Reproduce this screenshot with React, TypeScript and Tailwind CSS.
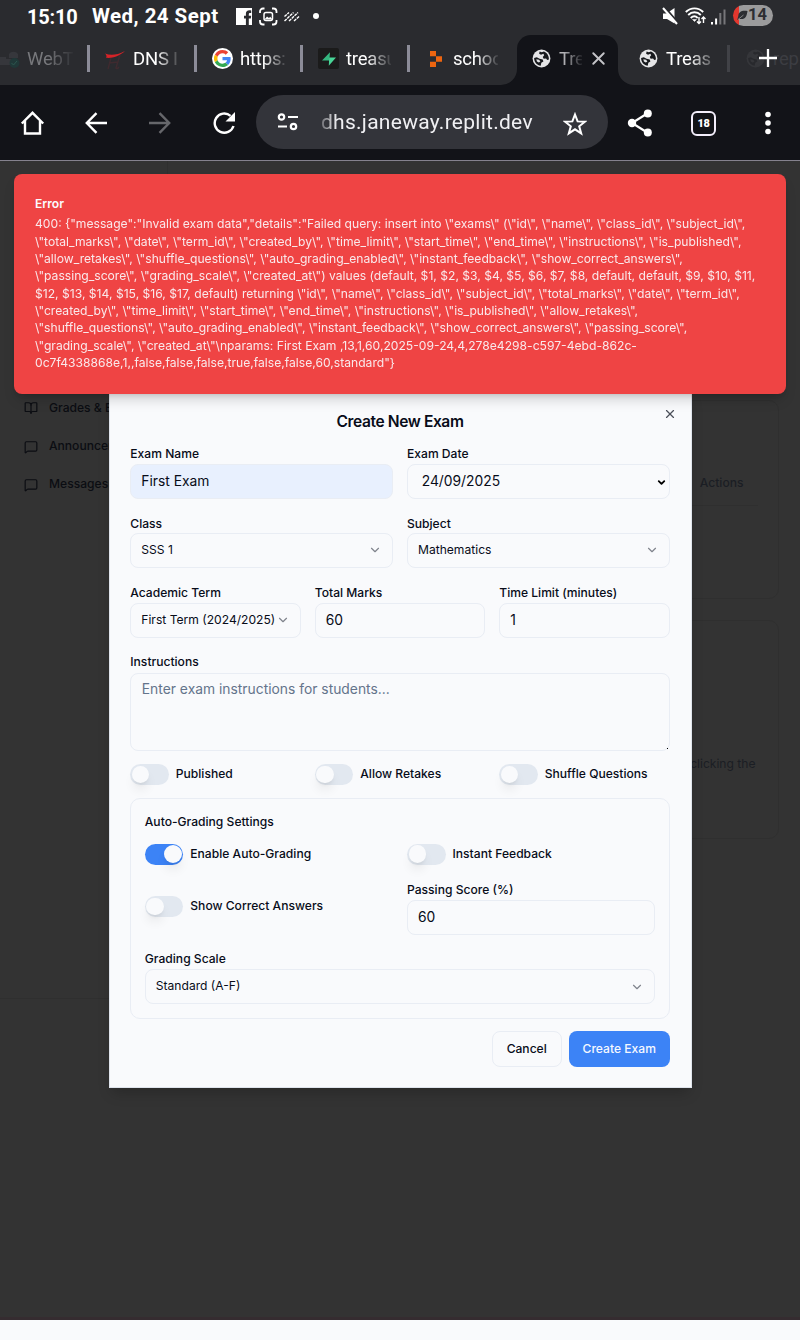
import React from "react";
import { BookOpen, ChevronDown, MessageSquare, X } from "lucide-react";

function Globe({ className = "" }: { className?: string }) {
  return (
    <svg viewBox="0 0 20 20" className={`size-[19px] shrink-0 ${className}`}>
      <circle cx="10" cy="10" r="9.4" fill="#e5e5e7" />
      <path d="M8 2.500 7.500 5l2 1 2.500-1 .8 1.500-1.500 2 1 1.700 2.500-.2 1.200 1.500 1.800-.5c.2-4-2-7-5.300-8.400L10.300 3.500Z" fill="#17191d" />
      <path d="M2.200 9.500 5 8.800l3 1.500 3.300.7.700 2.200-2.200 1.400-.6 3C5.500 17.500 2.200 14 2.200 9.500Z" fill="#17191d" />
      <path d="m4.500 10.800 3 .6 1.300 1.700-1.600 1.200-2-1.200Z" fill="#e5e5e7" />
    </svg>
  );
}

function TabText({ children, className }: { children: React.ReactNode; className: string }) {
  return (
    <span className={`overflow-hidden whitespace-nowrap text-[18.5px] leading-6 tracking-[-0.2px] ${className}`}>{children}</span>
  );
}

function Divider({ dim = false }: { dim?: boolean }) {
  return <span className={`h-[27px] w-[3px] shrink-0 ${dim ? "bg-[#414247]" : "bg-[#8c8c98]"}`} />;
}

function StatusBar() {
  return (
    <div className="flex h-[35px] shrink-0 items-center pb-[3px] pl-[27px] pr-[27px]">
      <span className="w-[65px] whitespace-nowrap pt-px text-[20px] font-bold tracking-[-0.2px]">15:10</span>
      <span className="w-[144px] whitespace-nowrap pt-px text-[20.500px] font-bold tracking-[0.450px]">Wed, 24 Sept</span>
      <svg viewBox="0 0 90 20" className="mt-px h-5 w-[90px]" fill="none">
        <path d="M0 1h16v17h-3.200v-6.500h2l.4-2.700h-2.400V7.200c0-.9.4-1.300 1.400-1.300h1V3.500c-3.700-.6-5.300.7-5.300 3.300v2H8v2.700h1.900V18H0Z" fill="white" />
        <path d="M24 6V4.500A3 3 0 0 1 27 1.500h1.500M36 1.500h1.500a3 3 0 0 1 3 3V6M40.500 13v1.500a3 3 0 0 1-3 3H36M28.500 17.500H27a3 3 0 0 1-3-3V13" stroke="white" strokeWidth="1.800" />
        <rect x="28" y="5.500" width="8.500" height="8" rx="2" stroke="white" strokeWidth="1.500" />
        <path d="m28.500 12.500 2.500-3 2 1.500 1.200-1.200 2.300 2.700Z" fill="white" />
        <path d="m48.500 14 9-8.500M53 14l9-8.500M58 14l5.500-5M48.500 9.500l4.500-4" stroke="white" strokeWidth="1.400" strokeDasharray="3 .8" />
        <circle cx="80" cy="9" r="3" fill="white" />
      </svg>
      <div className="ml-auto flex items-center gap-[6px]">
        <svg viewBox="0 0 16 18" className="ml-px h-[18px] w-4">
          <path d="M1 6.500h3.500L12.500 1v15.500L5 12H1Z" fill="white" />
          <path d="m2.500 0 13 15" stroke="#2a2b2f" strokeWidth="2" />
          <path d="m1 1 14 16" stroke="white" strokeWidth="2" />
        </svg>
        <svg viewBox="0 0 21 18" className="ml-px h-[18px] w-[21px]" fill="none" stroke="white">
          <path d="M.8 5c5-4.900 12.400-4.900 17.400 0M3.200 8c3.600-3.600 9-3.600 12.600 0M5.700 11c2.300-2.100 5-2.100 7 0" strokeWidth="1.900" />
          <path d="m7.500 12.500 2 2 2-2Z" fill="white" strokeWidth=".5" />
          <path d="M14 10v6.500m-2-2 2 2 2-2M18.500 16v-6m-2 2 2-2 2 2" strokeWidth="1.400" />
        </svg>
        <svg viewBox="0 0 15 18" className="-ml-px mr-px h-[18px] w-[15px]">
          <path d="M0 15h2v2.500H0ZM4.100 11.500h2v6h-2Z" fill="white" />
          <path d="M8.300 6h2v11.500h-2ZM12.500 2.500h2v15h-2Z" fill="#77777a" />
        </svg>
        <div className="-mt-[2px] flex h-[21px] w-10 items-center overflow-hidden rounded-full bg-[linear-gradient(90deg,#e4372e_0_6px,#9b9b9c_6px)] pl-[4px] text-[#2d2e32]">
          <svg viewBox="0 0 11 11" className="size-[11px] shrink-0">
            <path d="M10.500 1C5-.2 1.300 2 1.300 6L.2 10l2-1.300c5.500 1.300 7.400-1.300 8.300-7.700Z" fill="currentColor" />
            <path d="M1 9.500 6.500 5" stroke="#9b9b9c" strokeWidth=".8" />
          </svg>
          <span className="text-[16.500px] font-bold leading-5">14</span>
        </div>
      </div>
    </div>
  );
}

function TabStrip() {
  return (
    <div className="relative flex h-[50px] shrink-0 items-center overflow-hidden pb-[3px]">
      <div className="flex w-[87px] shrink-0 items-center">
        <svg viewBox="0 0 20 20" className="size-5">
          <path d="M0 8h6v8H0ZM9 5a5 4 0 0 1 9 0v4H9ZM5 10h9v6H5Z" fill="#36373c" />
          <circle cx="14.500" cy="14" r="5" fill="#203838" />
          <path d="m11.500 14 2 2 3.500-4" stroke="#2d574f" fill="none" />
        </svg>
        <TabText className="ml-[7px] w-[46px] text-[#77787c] [mask-image:linear-gradient(90deg,black_45%,transparent_105%)]">WebT</TabText>
      </div>
      <Divider />
      <div className="flex w-[104px] shrink-0 items-center pl-[15px]">
        <svg viewBox="0 0 20 22" className="h-[22px] w-5">
          <path d="M6.500 8 3 21M15 7l-4 13q1 1.500 3-1M4 15l9-1" stroke="#3f2a2f" strokeWidth="1.400" fill="none" />
          <path d="M0 5.500C6 8 12 7 20 3 14 8.500 7 10.500 1 9.800 2 8.500 1.500 7 0 5.500Z" fill="#d62328" />
        </svg>
        <TabText className="ml-2 w-[46px] [mask-image:linear-gradient(90deg,black_50%,transparent_105%)]">DNS I</TabText>
      </div>
      <Divider />
      <div className="flex w-[103px] shrink-0 items-center pl-[15px]">
        <span className="flex size-[21px] items-center justify-center rounded-full bg-white">
          <svg viewBox="0 0 48 48" className="size-[17px]">
            <path fill="#EA4335" d="M24 9.500c3.500 0 6.700 1.200 9.200 3.600l6.900-6.900C35.900 2.400 30.500 0 24 0 14.600 0 6.500 5.400 2.600 13.200l8 6.200C12.400 13.700 17.700 9.500 24 9.500z" />
            <path fill="#4285F4" d="M47 24.600c0-1.600-.2-3.100-.4-4.600H24v9h12.900c-.6 3-2.200 5.500-4.700 7.200l7.700 6C44.400 38 47 31.800 47 24.600z" />
            <path fill="#FBBC05" d="M10.500 28.600a14.500 14.500 0 0 1 0-9.200l-8-6.200a24 24 0 0 0 0 21.600z" />
            <path fill="#34A853" d="M24 48c6.500 0 11.900-2.100 15.900-5.800l-7.700-6c-2.200 1.500-4.900 2.300-8.200 2.300-6.300 0-11.600-4.200-13.500-9.900l-8 6.200C6.500 42.600 14.600 48 24 48z" />
          </svg>
        </span>
        <TabText className="ml-[7px] w-[46px] [mask-image:linear-gradient(90deg,black_50%,transparent_105%)]">https:</TabText>
      </div>
      <Divider />
      <div className="flex w-[104px] shrink-0 items-center pl-[15px]">
        <span className="flex size-[21px] items-center justify-center rounded-[2px] bg-[#1b1b1b]">
          <svg viewBox="0 0 14 14" className="size-[14px]">
            <path d="M8 .3 0 8.500h7.500V6.200Z" fill="#35b77f" />
            <path d="M6.800 13.700 14 5.500H7.200Z" fill="#48d597" />
          </svg>
        </span>
        <TabText className="ml-[7px] w-[45px] [mask-image:linear-gradient(90deg,black_45%,transparent_105%)]">treasu</TabText>
      </div>
      <Divider />
      <div className="flex w-[107px] shrink-0 items-center pl-[20px]">
        <svg viewBox="0 0 12 16" className="h-4 w-3" fill="#ed6510">
          <path d="M0 0h6v5.300H0ZM6 5.300h6v5.400H6ZM0 10.700h6V16H0Z" />
        </svg>
        <TabText className="ml-[11px] w-[45px] [mask-image:linear-gradient(90deg,black_50%,transparent_105%)]">schoo</TabText>
      </div>
      <div className="relative mt-[3px] flex h-[50px] w-[101px] shrink-0 items-center rounded-t-[14px] bg-[#121318] pb-[3px] pl-[15px]">
        <svg viewBox="0 0 16 16" className="absolute -left-4 bottom-0 size-4"><path d="M16 0v16H0A16 16 0 0 0 16 0Z" fill="#121318" /></svg>
        <svg viewBox="0 0 16 16" className="absolute -right-4 bottom-0 size-4"><path d="M0 0v16h16A16 16 0 0 1 0 0Z" fill="#121318" /></svg>
        <Globe />
        <TabText className="ml-2 w-[23px] text-[#b5b5b8] [mask-image:linear-gradient(90deg,black_20%,transparent_110%)]">Tre</TabText>
        <X className="ml-[6px] size-[21px] text-[#c4c4c8]" strokeWidth={2.2} />
      </div>
      <div className="flex w-[109px] shrink-0 items-center pl-[21px]">
        <Globe />
        <TabText className="ml-2 w-[46px] [mask-image:linear-gradient(90deg,black_50%,transparent_115%)]">Treas</TabText>
      </div>
      <Divider dim />
      <div className="flex w-[71px] shrink-0 items-center pl-[16px]">
        <Globe className="opacity-[0.06]" />
        <TabText className="ml-2 w-[28px] text-[#3c3d42]">rep</TabText>
      </div>
      <svg viewBox="0 0 20 20" className="absolute left-[758px] top-[12.500px] size-5"><path d="M10 1v18M1 10h18" stroke="white" strokeWidth="2.300" /></svg>
    </div>
  );
}

function Toolbar() {
  return (
    <div className="flex h-[75px] shrink-0 items-center bg-[#121318]">
      <svg viewBox="0 0 26 26" className="ml-[20px] mt-px size-[26px]" fill="none" stroke="white" strokeWidth="2.400"><path d="M1.800 13.500 12.500 2.800l10.700 10.700M5 11v12.500h15V11" /></svg>
      <svg viewBox="0 0 22 22" className="ml-[39px] mt-px size-[22px]" fill="none" stroke="white" strokeWidth="2.400"><path d="M22 11H2M11.500 1.200 1.800 11l9.700 9.800" /></svg>
      <svg viewBox="0 0 22 22" className="ml-[42px] mt-px size-[22px]" fill="none" stroke="#66676b" strokeWidth="2.400"><path d="M0 11h20M10.500 1.200l9.700 9.800-9.700 9.800" /></svg>
      <svg viewBox="0 0 24 24" className="ml-[41px] mt-px size-[24px]"><path d="M18.500 4.800A9.600 9.600 0 1 0 21.500 15" fill="none" stroke="white" strokeWidth="2.400" /><path d="M23 1v9.500h-9.500Z" fill="white" /></svg>
      <div className="ml-[20px] mt-[-1px] flex h-[54px] w-[352px] items-center rounded-full bg-[#33343a]">
        <svg viewBox="0 0 22 18" className="ml-[21px] h-[18px] w-[22px]" fill="none" stroke="white" strokeWidth="2.200"><circle cx="4.500" cy="4" r="2.700" /><path d="M11 4h10M1 13.500h9" /><circle cx="16.500" cy="13.500" r="2.700" /></svg>
        <span className="ml-[22px] w-[214px] whitespace-nowrap text-[21px] leading-7 tracking-[0.270px] text-[#f0f0f3] [mask-image:linear-gradient(90deg,rgba(0,0,0,.3)_0,black_16px)]">dhs.janeway.replit.dev</span>
        <svg viewBox="0 0 24 24" className="ml-[28px] mt-[3px] size-[24px]" fill="none" stroke="white" strokeWidth="2"><path d="m12 2.500 2.600 6.900 7.300.3-5.700 4.600 2 7.100-6.200-4.100-6.200 4.100 2-7.100-5.700-4.600 7.300-.3Z" /></svg>
      </div>
      <svg viewBox="0 0 26 28" className="ml-[19px] h-7 w-[26px]" fill="white"><path d="M21 4 5 14l16 10" fill="none" stroke="white" strokeWidth="2.200" /><circle cx="20.800" cy="4.500" r="4" /><circle cx="5" cy="14" r="4.200" /><circle cx="20.800" cy="23.500" r="4" /></svg>
      <span className="ml-[38px] mt-px flex size-[25px] items-center justify-center rounded-[6px] border-[2.500px] border-[#f3eefb] pt-px text-[11px] font-black leading-none tracking-[-0.500px]">18</span>
      <svg viewBox="0 0 6 24" className="ml-[49px] h-6 w-[6px]" fill="white"><circle cx="3" cy="3.500" r="2.800" /><circle cx="3" cy="12" r="2.800" /><circle cx="3" cy="20.500" r="2.800" /></svg>
    </div>
  );
}

const errorLines = [
  String.raw`400: {"message":"Invalid exam data","details":"Failed query: insert into \"exams\" (\"id\", \"name\", \"class_id\", \"subject_id\",`,
  String.raw`\"total_marks\", \"date\", \"term_id\", \"created_by\", \"time_limit\", \"start_time\", \"end_time\", \"instructions\", \"is_published\",`,
  String.raw`\"allow_retakes\", \"shuffle_questions\", \"auto_grading_enabled\", \"instant_feedback\", \"show_correct_answers\",`,
  String.raw`\"passing_score\", \"grading_scale\", \"created_at\") values (default, $1, $2, $3, $4, $5, $6, $7, $8, default, default, $9, $10, $11,`,
  String.raw`$12, $13, $14, $15, $16, $17, default) returning \"id\", \"name\", \"class_id\", \"subject_id\", \"total_marks\", \"date\", \"term_id\",`,
  String.raw`\"created_by\", \"time_limit\", \"start_time\", \"end_time\", \"instructions\", \"is_published\", \"allow_retakes\",`,
  String.raw`\"shuffle_questions\", \"auto_grading_enabled\", \"instant_feedback\", \"show_correct_answers\", \"passing_score\",`,
  String.raw`\"grading_scale\", \"created_at\"\nparams: First Exam ,13,1,60,2025-09-24,4,278e4298-c597-4ebd-862c-`,
  `0c7f4338868e,1,,false,false,false,true,false,false,60,standard"}`,
];

function Toast() {
  return (
    <div role="alert" className="absolute left-[13.500px] top-[12.700px] h-[220px] w-[772.700px] rounded-[8px] bg-[#ef4444] pl-[21.500px] pt-[21.300px] text-[12.130px] leading-[17.350px] text-[#fbfafd] shadow-[0_8px_13px_-3px_rgba(0,0,0,.18),0_3px_5px_-3px_rgba(0,0,0,.15)]">
      <div className="mb-[3px] font-semibold">Error</div>
      <div className="opacity-90">
        {errorLines.map((line) => (
          <div key={line} className="whitespace-nowrap">{line}</div>
        ))}
      </div>
    </div>
  );
}

function Field({ label, children, className = "" }: { label: string; children: React.ReactNode; className?: string }) {
  return (
    <div className={className}>
      <div className="h-[20px] whitespace-nowrap text-[12.100px] font-medium leading-[20px]">{label}</div>
      {children}
    </div>
  );
}

function Input({ value, filled = false }: { value: string; filled?: boolean }) {
  return (
    <div className={`h-[35px] rounded-[8px] border border-[#e9edf4] px-[10px] text-[13.830px] leading-[32px] ${filled ? "bg-[#e8f0fe]" : ""}`}>{value}</div>
  );
}

function Select({ value }: { value: string }) {
  return (
    <div className="flex h-[35px] items-center justify-between rounded-[8px] border border-[#e9edf4] px-[10px] text-[12.100px]">
      <span className="whitespace-nowrap pb-px">{value}</span>
      <ChevronDown className="size-[14px] shrink-0 text-[#80848d]" />
    </div>
  );
}

function Toggle({ label, on = false }: { label: string; on?: boolean }) {
  return (
    <div className="flex h-[21px] items-center gap-[7px]">
      <span className={`flex h-[21px] w-[38.500px] shrink-0 items-center rounded-full px-[1.500px] ${on ? "justify-end bg-[#3c83f6]" : "bg-[#e2e8f0]"}`}>
        <span className="size-[17.500px] rounded-full bg-[#f9fafc] shadow-[0_8px_12px_-2px_rgba(0,0,0,.09),0_3px_4px_-2px_rgba(0,0,0,.08)]" />
      </span>
      <span className="whitespace-nowrap pb-px text-[12.100px] font-medium">{label}</span>
    </div>
  );
}

function ExamDialog() {
  return (
    <div role="dialog" className="absolute left-[109px] top-[228px] flex h-[699px] w-[583px] flex-col border border-[#dfe4ec] bg-[#f9fafc] pl-[20.300px] pr-[21.300px] pt-[20.300px] text-[#080c19] shadow-[0_8px_13px_-3px_rgba(0,0,0,.2)]">
      <X className="absolute right-[14px] top-[16.700px] size-[14px] text-[#4b4f59]" />
      <h2 className="h-[34px] pt-[2px] text-center text-[15.560px] font-semibold leading-[20px] tracking-[-0.390px]">Create New Exam</h2>
      <div className="grid grid-cols-2 gap-x-[14px] gap-y-[14.300px]">
        <Field label="Exam Name"><Input value="First Exam" filled /></Field>
        <Field label="Exam Date">
          <div className="flex h-[35px] items-center justify-between rounded-[8px] border border-[#e9edf4] pl-[13.700px] pr-[2px] text-[13.830px]">
            <span className="pb-px">24/09/2025</span>
            <ChevronDown className="mt-px size-[11px] text-black" strokeWidth={4} />
          </div>
        </Field>
        <Field label="Class"><div className="-mt-[0.700px]"><Select value="SSS 1" /></div></Field>
        <Field label="Subject"><div className="-mt-[0.700px]"><Select value="Mathematics" /></div></Field>
      </div>
      <div className="mt-[15px] grid grid-cols-3 gap-[14px]">
        <Field label="Academic Term"><Select value="First Term (2024/2025)" /></Field>
        <Field label="Total Marks"><Input value="60" /></Field>
        <Field label="Time Limit (minutes)"><Input value="1" /></Field>
      </div>
      <Field label="Instructions" className="mt-[14px]">
        <div className="relative mt-[0.700px] h-[78px] rounded-[8px] border border-[#e9edf4] px-[10.500px] pt-[5.500px] text-[13.850px] leading-[20px] text-[#64748b]">
          Enter exam instructions for students...
          <span className="absolute bottom-[1px] right-[1px] size-px bg-black" />
        </div>
      </Field>
      <div className="mt-[13.200px] grid grid-cols-3 gap-[14px]">
        <Toggle label="Published" />
        <Toggle label="Allow Retakes" />
        <Toggle label="Shuffle Questions" />
      </div>
      <section className="mt-[12.900px] h-[221px] rounded-[10px] border border-[#e9edf4] px-[13.500px] pt-[14px]">
        <h3 className="h-[31px] text-[12.100px] font-medium leading-[17px]">Auto-Grading Settings</h3>
        <div className="grid grid-cols-2 gap-x-[14px] gap-y-[15.400px]">
          <Toggle label="Enable Auto-Grading" on />
          <Toggle label="Instant Feedback" />
          <div className="flex items-center pb-[2px]"><Toggle label="Show Correct Answers" /></div>
          <Field label="Passing Score (%)"><Input value="60" /></Field>
        </div>
        <Field label="Grading Scale" className="mt-[14px]"><Select value="Standard (A-F)" /></Field>
      </section>
      <div className="mt-[12.500px] flex justify-end gap-[7px] text-[12.100px] font-medium">
        <button className="h-[35.500px] w-[70px] rounded-[8px] border border-[#e9edf4]">Cancel</button>
        <button className="h-[35.500px] w-[101px] rounded-[8px] bg-[#3c83f6] text-[#f4f8ff]">Create Exam</button>
      </div>
    </div>
  );
}

function Backdrop() {
  return (
    <div className="flex h-[1159px] border-b-[3px] border-[#352c30] text-[12.100px] font-medium">
      <aside className="flex h-[838px] w-[168px] flex-col gap-[21px] border-b border-r border-[#2f2f2f] pl-[24px] pt-[238.700px] text-[#0b0d12]">
        <div className="flex h-[17px] items-center gap-[11px]"><BookOpen className="size-[14px]" /><span className="whitespace-nowrap">Grades &amp; Exams</span></div>
        <div className="flex h-[17px] items-center gap-[11px]"><MessageSquare className="mt-[2px] size-[14px]" /><span>Announcements</span></div>
        <div className="flex h-[17px] items-center gap-[11px]"><MessageSquare className="mt-[2px] size-[14px]" /><span>Messages</span></div>
      </aside>
      <main className="flex flex-1 flex-col gap-[21px] pl-[20px] pr-[21.500px] pt-[239px] text-[#1b1e24]">
        <section className="h-[199px] rounded-[10px] border border-[#2f2f2f] px-[20px] pt-[73px]">
          <div className="h-[32px] border-b border-[#2f2f2f] pr-[14px] text-right leading-[17px]">Actions</div>
        </section>
        <section className="h-[219px] rounded-[10px] border border-[#2f2f2f] pr-[22px] pt-[134px] text-right font-normal leading-[17px]">clicking the</section>
      </main>
    </div>
  );
}

export default function App() {
  return (
    <div className="flex h-[1340px] w-[800px] flex-col overflow-hidden bg-[#2a2b2f] font-['Roboto',sans-serif] text-white">
      <StatusBar />
      <TabStrip />
      <Toolbar />
      <div className="relative flex-1 border-t border-[#85828e] bg-[#f9fafc] font-['Inter',sans-serif]">
        <div className="bg-[#333333]"><Backdrop /></div>
        <ExamDialog />
        <Toast />
      </div>
    </div>
  );
}
